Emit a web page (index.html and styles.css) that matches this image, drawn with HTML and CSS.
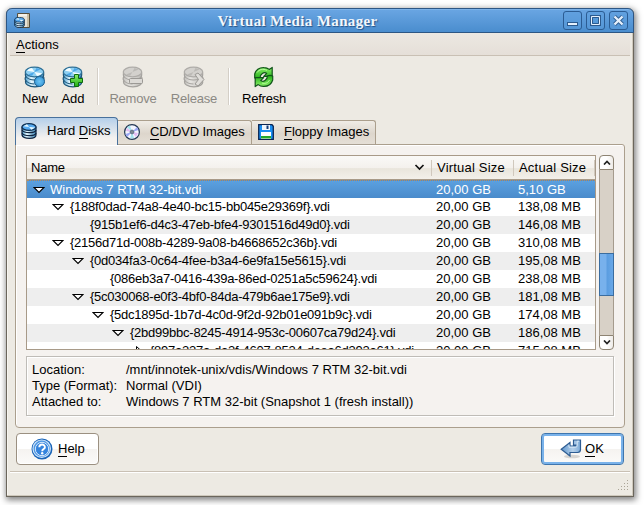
FILE: index.html
```html
<!DOCTYPE html>
<html lang="en">
<head>
<meta charset="utf-8">
<title>Virtual Media Manager</title>
<link rel="stylesheet" href="styles.css">
</head>
<body>
<svg class="defs" width="0" height="0">
  <defs>
    <linearGradient id="steel" x1="0" x2="1"><stop offset="0" stop-color="#4ba0d2"/><stop offset=".35" stop-color="#e8f9ff"/><stop offset="1" stop-color="#3d8fc4"/></linearGradient>
    <linearGradient id="grey" x1="0" x2="1"><stop offset="0" stop-color="#c3c1bd"/><stop offset=".35" stop-color="#e6e4e0"/><stop offset="1" stop-color="#bab8b4"/></linearGradient>
    <linearGradient id="green" x1="0" y1="0" x2="0" y2="1"><stop offset="0" stop-color="#8df06a"/><stop offset="1" stop-color="#1fae14"/></linearGradient>
    <radialGradient id="ball"><stop offset="0" stop-color="#6cc4f4"/><stop offset="1" stop-color="#3a9ad8"/></radialGradient>
    <linearGradient id="arrow" x1="0" y1="0" x2="1" y2="0"><stop offset="0" stop-color="#5f95cc"/><stop offset=".6" stop-color="#b5d0ea"/><stop offset="1" stop-color="#7eabd8"/></linearGradient>
    <symbol id="disk" viewBox="0 0 22 22">
      <path d="M1.500 6c0 3-.5 3 .3 4.500-.8 1.500-.8 3 0 4-.8 2 .2 3.500 1.700 4.500 4 2.500 11 2.500 14.500 0 1.500-1 2-3 1.300-4.500.8-1.500.8-3 0-4 .7-1.500.4-3 .2-4.500z" fill="url(#steel)" stroke="#1d5578" stroke-width="1.200"/>
      <path d="M1.800 10.500c2 2.500 5 3.500 8.700 3.500s7-1 8.800-3.500M1.800 14.500c2 2.500 5 3.500 8.700 3.500" fill="none" stroke="#1d5578" stroke-width="1.100"/>
      <ellipse cx="10.500" cy="6" rx="9.200" ry="4.800" fill="#8fd0f2" stroke="#2f7096" stroke-width="1.200"/>
      <path d="M10.500 6L3 4.800c1-1.700 3-2.500 5-2.800zM10.500 6l7.500 1.200c-1 1.500-3 2.500-5 2.800z" fill="#f2fcff"/>
      <path d="M10.500 6l2-4 4 1.500zM10.500 6L8 9.800 4 8.500z" fill="#4aa6e8"/>
    </symbol>
    <symbol id="greydisk" viewBox="0 0 22 22">
      <path d="M1.500 6c0 3-.5 3 .3 4.500-.8 1.500-.8 3 0 4-.8 2 .2 3.500 1.700 4.500 4 2.500 11 2.500 14.500 0 1.500-1 2-3 1.300-4.500.8-1.500.8-3 0-4 .7-1.500.4-3 .2-4.500z" fill="url(#grey)" stroke="#a5a39f" stroke-width="1.200"/>
      <path d="M1.800 10.500c2 2.500 5 3.500 8.700 3.500s7-1 8.800-3.500M1.800 14.500c2 2.500 5 3.500 8.700 3.500" fill="none" stroke="#a5a39f" stroke-width="1.100"/>
      <ellipse cx="10.500" cy="6" rx="9.200" ry="4.800" fill="#d3d1cd" stroke="#aeaca8" stroke-width="1.200"/>
      <path d="M10.500 6l2-4 4 1.500zM10.500 6L8 9.800 4 8.500z" fill="#bcbab6"/>
    </symbol>
    <symbol id="darkdisk" viewBox="0 0 16 16">
      <path d="M1 4v8c.5 2 3.500 3.300 7.500 3.300S15 14 15 12V4z" fill="url(#steel)" stroke="#10243f" stroke-width="1.200"/>
      <path d="M1 7c1 2 4 2.700 7.500 2.700S14.500 9 15 7M1 10c1 2 4 2.700 7.500 2.700S14.500 12 15 10" fill="none" stroke="#10243f" stroke-width="1.200"/>
      <ellipse cx="8" cy="4" rx="7" ry="3.400" fill="#56aaf0" stroke="#123254" stroke-width="1.200"/>
      <path d="M8 4L2.500 3.300 6 1.300zM8 4l6 .5-3.500 2.200z" fill="#e9faff"/>
    </symbol>
    <symbol id="open" viewBox="0 0 12 8"><path d="M1 1.500h10L6 6.500z" fill="#fff" stroke="#000" stroke-width="1.150"/></symbol>
  </defs>
</svg>

<div class="window">
  <header class="titlebar">
    <svg class="app-icon" width="16" height="16" viewBox="0 0 16 16"><path d="M3.500 .5h12v14h-12z" fill="#e8e4d8" stroke="#554f3e"/><path d="M14 1v13" stroke="#a99770"/><path d="M5 2h8" stroke="#fff"/><use href="#darkdisk" x="0" y="4" width="11" height="11"/></svg>
    <h1>Virtual Media Manager</h1>
    <div class="controls">
      <svg width="19" height="19"><rect class="ctl" x=".5" y=".5" width="18" height="18" rx="2.500"/><rect x="4.500" y="11.500" width="10" height="3" fill="#e5f0fc" stroke="#2c5a8e"/></svg>
      <svg width="19" height="19"><rect class="ctl" x=".5" y=".5" width="18" height="18" rx="2.500"/><path d="M4 4h11v11H4z" fill="#2c5a8e"/><path d="M5.500 5.500h8v8h-8z" fill="#579ada" stroke="#e5f0fc" /><path d="M6.500 6.500h6v6h-6z" fill="#579ada" stroke="#2c5a8e"/></svg>
      <svg width="19" height="19"><rect class="ctl" x=".5" y=".5" width="18" height="18" rx="2.500"/><path d="M5.500 5.500l8 8m0-8l-8 8" stroke="#2c5a8e" stroke-width="4"/><path d="M5.500 5.500l8 8m0-8l-8 8" stroke="#e5f0fc" stroke-width="2.400"/></svg>
    </div>
  </header>

  <nav class="menubar"><span><u>A</u>ctions</span></nav>

  <div class="toolbar">
    <div class="tool new"><svg width="22" height="22"><use href="#disk" width="22" height="22"/><circle cx="15.500" cy="15.500" r="5" fill="url(#ball)" stroke="#1b5f90"/></svg><span>New</span></div>
    <div class="tool add"><svg width="22" height="22"><use href="#disk" width="22" height="22"/><path d="M12.500 8.500h4v4h4v4h-4v4h-4v-4h-4v-4h4z" fill="url(#green)" stroke="#0e6a10"/></svg><span>Add</span></div>
    <i class="sep"></i>
    <div class="tool remove off"><svg width="22" height="22"><use href="#greydisk" width="22" height="22"/><rect x="7.500" y="12.500" width="13" height="5" rx="1" fill="#dcdad6" stroke="#9b9995"/></svg><span>Remove</span></div>
    <div class="tool release off"><svg width="22" height="22"><use href="#greydisk" width="22" height="22"/><path d="M12 8.500l3-1.500 6 6.500-6 6.500-3-2 3.500-4.500z" fill="#e0deda" stroke="#9b9995"/></svg><span>Release</span></div>
    <i class="sep"></i>
    <div class="tool refresh"><svg width="22" height="22" viewBox="0 0 22 22"><g fill="url(#green)" stroke="#11551a" stroke-width="1.200" stroke-linejoin="round"><path id="swoop" d="M1.700 12V8C3 3.500 6.500 1.500 11 1.600c2.500 0 4 .8 5.200 1.800l3-2v9h-8.500l3-3C11 5.500 7 8 7 12c-1.500.8-3.800.8-5.300 0z"/><use href="#swoop" transform="rotate(180 10.700 11)"/></g><path d="M4 6.500c2-3 6-4.200 10-2.200M9 17c3 1 6 0 7.500-3" fill="none" stroke="#b8ff9e"/></svg><span>Refresh</span></div>
  </div>

  <div class="tabs">
    <div class="tab active"><svg width="16" height="16"><use href="#darkdisk" width="16" height="16"/></svg><span>Hard <u>D</u>isks</span></div>
    <div class="tab cd"><svg width="16" height="16" viewBox="0 0 16 16"><circle cx="8" cy="8" r="7.400" fill="#f3f5ff" stroke="#223753" stroke-width="1.200"/><path d="M8 8L3 3l3-1.500zM8 8l2 6-4 .5z" fill="#a6e4ef"/><path d="M8 8l5-5 1.500 3zM8 8l-5 5-1.500-3z" fill="#9aa6f4"/><path d="M8 8l6 1-2 4zM8 8L2 7l1-3z" fill="#e4bcf3"/><circle cx="8" cy="8" r="2" fill="#1b2a3d" stroke="#8797aa"/><circle cx="8" cy="8" r=".8" fill="#fff"/></svg><span><u>C</u>D/DVD Images</span></div>
    <div class="tab floppy"><svg width="16" height="16" viewBox="0 0 16 16"><path d="M.7.700h13.300l1.300 1.500v13.100H.7z" fill="#1a8ef2" stroke="#0b2553" stroke-width="1.300"/><path d="M4 1h8v5H4z" fill="#eef4fb"/><path d="M8.500 1.500h2v3.500h-2z" fill="#143c78"/><path d="M3 8h10v7H3z" fill="#fff"/><path d="M3 12h10v2.500H3z" fill="#25a92c"/></svg><span><u>F</u>loppy Images</span></div>
  </div>

  <main class="pane">
    <div class="browser">
      <div class="tree">
        <div class="row head"><span class="name">Name<svg width="11" height="7"><path d="M1.500 1l4 4 4-4" fill="none" stroke="#111" stroke-width="1.700"/></svg></span><span>Virtual Size</span><span class="actual">Actual Size</span></div>
        <div class="row sel"><span class="name l0"><svg class="tw" width="12" height="8"><use href="#open"/></svg>Windows 7 RTM 32-bit.vdi</span><span>20,00 GB</span><span>5,10 GB</span></div>
        <div class="row"><span class="name id l1"><svg class="tw" width="12" height="8"><use href="#open"/></svg>{188f0dad-74a8-4e40-bc15-bb045e29369f}.vdi</span><span>20,00 GB</span><span>138,08 MB</span></div>
        <div class="row alt"><span class="name id l2"><i class="tw"></i>{915b1ef6-d4c3-47eb-bfe4-9301516d49d0}.vdi</span><span>20,00 GB</span><span>146,08 MB</span></div>
        <div class="row"><span class="name id l1"><svg class="tw" width="12" height="8"><use href="#open"/></svg>{2156d71d-008b-4289-9a08-b4668652c36b}.vdi</span><span>20,00 GB</span><span>310,08 MB</span></div>
        <div class="row alt"><span class="name id l2"><svg class="tw" width="12" height="8"><use href="#open"/></svg>{0d034fa3-0c64-4fee-b3a4-6e9fa15e5615}.vdi</span><span>20,00 GB</span><span>195,08 MB</span></div>
        <div class="row"><span class="name id l3"><i class="tw"></i>{086eb3a7-0416-439a-86ed-0251a5c59624}.vdi</span><span>20,00 GB</span><span>238,08 MB</span></div>
        <div class="row alt"><span class="name id l2"><svg class="tw" width="12" height="8"><use href="#open"/></svg>{5c030068-e0f3-4bf0-84da-479b6ae175e9}.vdi</span><span>20,00 GB</span><span>181,08 MB</span></div>
        <div class="row"><span class="name id l3"><svg class="tw" width="12" height="8"><use href="#open"/></svg>{5dc1895d-1b7d-4c0d-9f2d-92b01e091b9c}.vdi</span><span>20,00 GB</span><span>174,08 MB</span></div>
        <div class="row alt"><span class="name id l4"><svg class="tw" width="12" height="8"><use href="#open"/></svg>{2bd99bbc-8245-4914-953c-00607ca79d24}.vdi</span><span>20,00 GB</span><span>186,08 MB</span></div>
        <div class="row"><span class="name id l5"><svg class="tw" width="12" height="12"><path d="M4.500 1.500v9l5-4.500z" fill="#fff" stroke="#000"/></svg>{897a227a-da2f-4607-8524-deea6d392a61}.vdi</span><span>20,00 GB</span><span>715,08 MB</span></div>
      </div>
      <div class="scroll">
        <div class="step up"><svg width="8" height="5"><path d="M1 4.500L4 1.500l3 3" /></svg></div>
        <div class="track"><div class="thumb"></div></div>
        <div class="step down"><svg width="8" height="5"><path d="M1 .5l3 3 3-3"/></svg></div>
      </div>
    </div>
    <dl class="info">
      <dt>Location:</dt><dd>/mnt/innotek-unix/vdis/Windows 7 RTM 32-bit.vdi</dd>
      <dt>Type (Format):</dt><dd>Normal (VDI)</dd>
      <dt>Attached to:</dt><dd>Windows 7 RTM 32-bit (Snapshot 1 (fresh install))</dd>
    </dl>
  </main>

  <div class="buttons">
    <button class="btn help"><svg width="22" height="22" viewBox="0 0 22 22"><circle cx="11" cy="11" r="10.500" fill="#1a65b8"/><circle cx="10.700" cy="10.700" r="8.700" fill="#4c97e4" stroke="#cfe4fa" stroke-width="1.200"/><circle cx="11" cy="11" r="6.700" fill="#3584dd" stroke="#d9eafc"/><path d="M8.300 9.200c0-3.600 5.600-3.600 5.600 0 0 2-2.700 1.800-2.700 4" fill="none" stroke="#fff" stroke-width="1.900"/><circle cx="11.200" cy="15.300" r="1.200" fill="#fff"/></svg><span><u>H</u>elp</span></button>
    <button class="btn ok"><svg width="22" height="20" viewBox="0 0 22 20"><ellipse cx="12" cy="17.500" rx="8" ry="1.800" fill="#d6d4d1"/><path d="M13.500 1h7v9.500c0 2-1 3-3 3H10V17L1.200 10.300 10 3.500V7h5c.7 0 1-.4 1-1H13.500z" fill="url(#arrow)" stroke="#2d5c92" stroke-width="1.200"/><path d="M9 5.800V8.200h6.500c1.200 0 1.700-.7 1.700-1.700V2.200h2" fill="none" stroke="#d8e8f7"/></svg><span><u>O</u>K</span></button>
  </div>

  <footer class="status"><svg width="12" height="12"><g fill="#aaa496"><path d="M9 0h1v1H9zM6 3h1v1H6zM9 3h1v1H9zM3 6h1v1H3zM6 6h1v1H6zM9 6h1v1H9zM0 9h1v1H0zM3 9h1v1H3zM6 9h1v1H6zM9 9h1v1H9z"/></g></svg></footer>
</div>
</body>
</html>
```
FILE: styles.css
```css
* { box-sizing: border-box; }
body { margin: 0; padding: 8px 0 0 6px; width: 644px; height: 505px; overflow: hidden; background: #fff; font: 13px/16px "Liberation Sans", Arial, sans-serif; color: #000; }
svg { display: block; flex: none; }
.defs { position: absolute; }
u { text-decoration: none; border-bottom: 1px solid #000; display: inline-block; line-height: 14px; }
.window { width: 628px; height: 489px; display: flex; flex-direction: column; background: #edeae3; border: 1px solid #6b665c; border-top: 0; border-radius: 6px 6px 0 0; box-shadow: inset -1px -1px #cfc9bd, inset 1px 0 #f8f6f1, 1px 2px 6px 1px rgba(0,0,0,.5); }
.titlebar { height: 25px; flex: none; margin: 0 -1px; display: flex; align-items: center; padding: 0 5px 0 7px; border: 1px solid #2d5684; border-radius: 6px 6px 0 0; background: linear-gradient(#6aa6e3, #4a8dce); box-shadow: inset 0 1px #7db3ea; }
.titlebar h1 { flex: 1; margin: 0; padding-left: 2px; text-align: center; font: bold 15px/20px "Liberation Serif", serif; letter-spacing: .35px; color: #f2f7fd; text-shadow: 1px 1px 1px #27558a; }
.controls { display: flex; gap: 4px; }
.ctl { fill: #5b9ddd; fill-opacity: .5; stroke: #2b5c93; }
.menubar { height: 23px; flex: none; margin: 0 3px; padding: 4px 6px 2px; background: linear-gradient(#ece8e2, #e5dfd8); border-bottom: 1px solid #c9c0b4; }
.toolbar { height: 61px; flex: none; display: flex; padding-top: 10px; }
.tool { display: flex; flex-direction: column; align-items: center; gap: 3px; text-align: center; white-space: nowrap; }
.new { width: 38px; margin-left: 9px; }
.add { width: 38px; }
.remove, .release, .refresh { letter-spacing: -.2px; }
.remove { width: 62px; }
.release { width: 60px; }
.refresh { width: 60px; }
.off { color: #8b8984; }
.sep { width: 2px; height: 37px; margin-top: 2px; background: #d4cfc7; border-right: 1px solid #fff; flex: none; }
.add + .sep { margin-left: 5px; margin-right: 3px; }
.release + .sep { margin-left: 4px; margin-right: 4px; }
.tabs { height: 28px; flex: none; display: flex; align-items: flex-end; padding-left: 8px; position: relative; z-index: 1; }
.tab { display: flex; align-items: center; height: 25px; padding: 0 6px 1px 4px; gap: 10px; border: 1px solid #ab9f8d; border-left: 0; border-bottom-color: #a99f91; border-radius: 0 3px 0 0; background: linear-gradient(#f0ece6, #ddd6cc 55%, #e5dfd6); white-space: nowrap; }
.tab.active { width: 103px; height: 28px; border: 1px solid #48719c; border-bottom: 0; border-radius: 4px 4px 0 0; background: linear-gradient(#b4cfea, #f5f2ef 75%); padding: 0 5px 2px 5px; }
.tab.cd { width: 134px; padding-left: 6px; letter-spacing: -.12px; }
.tab.floppy { width: 124px; padding-left: 6px; }
.pane { height: 284px; flex: none; width: 610px; margin: -1px 0 0 8px; padding: 10px 10px 0; display: flex; flex-direction: column; gap: 6px; border: 1px solid #ab9f8d; border-radius: 0 3px 4px 4px; background: #f5f2ef; box-shadow: inset 1px 1px #fff; }
.browser { display: flex; gap: 3px; height: 195px; flex: none; }
.tree { width: 570px; height: 195px; overflow: hidden; border: 1px solid #a89a88; background: #fff; white-space: nowrap; }
.row { display: grid; grid-template-columns: 405px 82px 81px; align-items: center; height: 18px; }
.row > span { padding-left: 4px; }
.row > .name { display: flex; align-items: center; padding: 0; }
.row > .id { letter-spacing: -.24px; }
.head { height: 24px; background: linear-gradient(#faf9f7, #f4f1ed 50%, #e9e5dc 55%, #f3f0ea); border-bottom: 1px solid #a89a88; }
.head > span { border-right: 1px solid #d0c8bd; height: 16px; letter-spacing: .2px; padding-left: 5px; }
.row.head > .name { justify-content: space-between; padding: 0 6px 0 4px; letter-spacing: -.2px; }
.sel { color: #fff; background: linear-gradient(#5ba0df, #4a8bcb); border-top: 1px dotted #b38d62; }
.alt { background: #eee; }
.tw { width: 12px; margin-right: 6px; flex: none; }
.row > .l0 { padding-left: 6px; }
.l0 .tw { margin-right: 5px; }
.row > .l1 { padding-left: 25px; }
.row > .l2 { padding-left: 45px; }
.row > .l3 { padding-left: 65px; }
.row > .l4 { padding-left: 85px; }
.row > .l5 { padding-left: 105px; }
.scroll { width: 15px; display: flex; flex-direction: column; }
.step { height: 15px; display: flex; align-items: center; justify-content: center; border: 1px solid #8e8473; background: linear-gradient(90deg, #fff 50%, #eeebe7); }
.step path { fill: none; stroke: #222; stroke-width: 1.700; }
.up { border-radius: 4px 4px 0 0; }
.down { border-radius: 0 0 4px 4px; }
.track { flex: 1; padding-top: 83px; background: #d8d1c7; border: solid #a59b8d; border-width: 0 1px; }
.thumb { height: 43px; margin: 0 -1px; border: 1px solid #3b6d9f; background: linear-gradient(90deg, #78b1ec 45%, #5b9de0 55%, #69a8e8); }
.info { margin: 0; width: 588px; height: 60px; display: grid; grid-template-columns: 94px 1fr; grid-auto-rows: 16px; padding: 5px; border: 1px solid #bfbcb7; box-shadow: 1px 1px #fff, inset 1px 1px #fff; white-space: nowrap; }
.info dd { margin: 0; }
.buttons { display: flex; justify-content: space-between; flex: none; padding: 5px 9px 0; height: 43px; }
.btn { width: 83px; height: 32px; display: flex; align-items: center; padding: 0; font: inherit; color: #000; border: 1px solid #9b9081; border-radius: 4px; background: linear-gradient(#fff 50%, #f5f3f0 50%, #fbfaf9); box-shadow: inset 0 0 0 1px #fff; }
.help { padding-left: 14px; gap: 5px; }
.ok { padding-left: 18px; gap: 3px; border-color: #3f76ae; box-shadow: inset 0 0 0 2px #79b2ea; }
.status { flex: 1; margin: 0 3px; border-top: 1px solid #c9c0b4; box-shadow: inset 0 1px #fff; display: flex; justify-content: flex-end; align-items: flex-end; padding: 0 0 4px; }
```
